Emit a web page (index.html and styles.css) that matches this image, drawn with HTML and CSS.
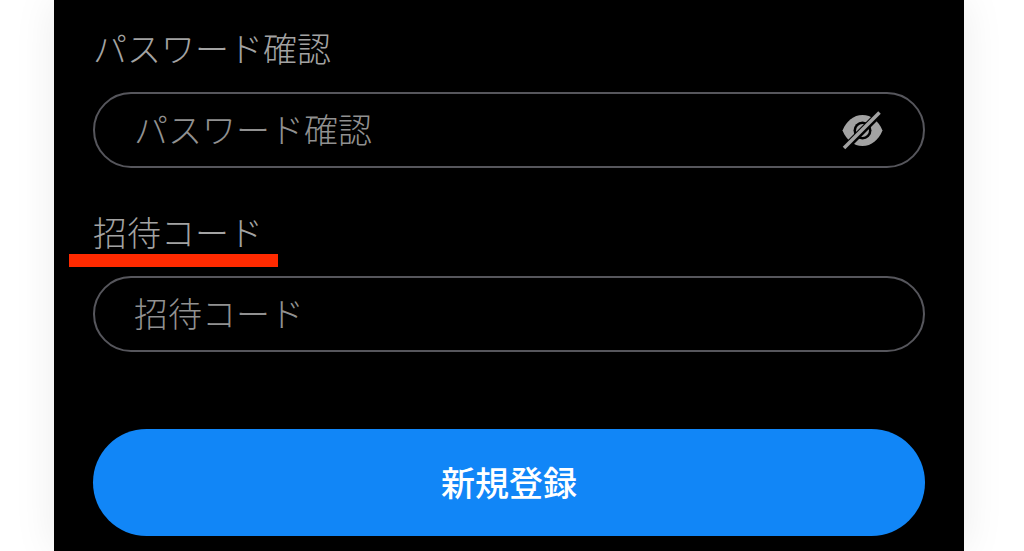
FILE: index.html
```
<!DOCTYPE html>
<html lang="ja">
<head>
<meta charset="utf-8">
<title>新規登録</title>
<link rel="stylesheet" href="styles.css">
</head>
<body>
<main class="panel">
  <form class="form">
    <div class="field">
      <label class="label">パスワード確認</label>
      <div class="input">
        <span class="placeholder">パスワード確認</span>
        <svg class="eye" viewBox="0 0 44 44" aria-hidden="true">
          <path class="eye-fill" d="M1.500 22.500C5.500 13 12.500 7 21.500 7S37.500 13 41.500 22.500C37.500 32 30.500 38 21.500 38S5.500 32 1.500 22.500Z"/>
          <circle class="eye-hole" cx="21.500" cy="22.500" r="9"/>
          <circle class="eye-fill" cx="21.500" cy="22.500" r="6.500"/>
          <path class="eye-gap" d="M3 41 39 5"/>
          <path class="eye-slash" d="M3 40 38.500 4.500"/>
        </svg>
      </div>
    </div>
    <div class="field field-invite">
      <label class="label label-marked">招待コード<span class="mark"></span></label>
      <div class="input">
        <span class="placeholder">招待コード</span>
      </div>
    </div>
    <button class="submit" type="button">新規登録</button>
  </form>
</main>
</body>
</html>
```
FILE: styles.css
```
html, body {
  margin: 0;
  height: 100%;
  overflow: hidden;
  background: #fff;
}
body {
  font-family: "Noto Sans CJK JP", "Noto Sans", sans-serif;
}
.panel {
  box-sizing: border-box;
  width: 910px;
  height: 551px;
  margin-left: 54px;
  padding: 24px 39px 0;
  background: #000;
  box-shadow: 0 0 40px rgba(0, 0, 0, 0.08);
}
.form {
  display: flex;
  flex-direction: column;
}
.field {
  display: flex;
  flex-direction: column;
  gap: 18px;
}
.field-invite {
  margin-top: 40px;
}
.label {
  position: relative;
  display: block;
  height: 50px;
  font-size: 34px;
  font-weight: 300;
  line-height: 47px;
  color: #a3a3a3;
}
.label-marked {
  width: fit-content;
}
.mark {
  position: absolute;
  left: -24px;
  top: 46px;
  width: 209px;
  height: 13px;
  background: #ff2a00;
}
.input {
  box-sizing: border-box;
  display: flex;
  align-items: center;
  justify-content: space-between;
  height: 76px;
  padding: 0 38px 0 39px;
  border: 2px solid #56565c;
  border-radius: 38px;
}
.placeholder {
  padding-bottom: 3px;
  font-size: 34px;
  font-weight: 300;
  line-height: 47px;
  color: #919191;
}
.eye {
  width: 44px;
  height: 44px;
}
.eye-fill {
  fill: #a2a2a2;
}
.eye-hole {
  fill: #000;
}
.eye-gap {
  stroke: #000;
  stroke-width: 7;
  fill: none;
}
.eye-slash {
  stroke: #a2a2a2;
  stroke-width: 3.500;
  fill: none;
}
.submit {
  height: 107px;
  margin-top: 77px;
  padding: 0 0 3px;
  border: 0;
  border-radius: 54px;
  background: #1186f7;
  color: #fff;
  font-family: inherit;
  font-size: 34px;
  font-weight: 500;
}
```
